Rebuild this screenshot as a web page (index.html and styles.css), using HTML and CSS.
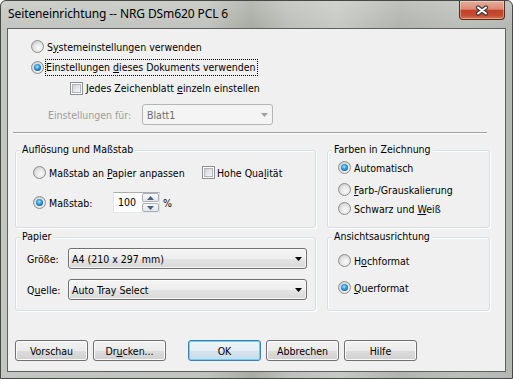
FILE: index.html
```html
<!DOCTYPE html>
<html lang="de">
<head>
<meta charset="utf-8">
<title>Seiteneinrichtung</title>
<link rel="stylesheet" href="styles.css">
</head>
<body>
<div class="window">
  <div class="titlebar">
    <div class="title">Seiteneinrichtung -- NRG DSm620 PCL 6</div>
    <div class="close">
      <svg width="14" height="11" viewBox="0 0 14 11"><path d="M3 2.5 L11 8.5 M11 2.5 L3 8.5" stroke="#3a3a3a" stroke-width="4.2" stroke-linecap="round"/><path d="M3 2.5 L11 8.5 M11 2.5 L3 8.5" stroke="#ffffff" stroke-width="2" stroke-linecap="round"/></svg>
    </div>
  </div>
  <div class="client">
    <div class="top">
      <div class="row r-sys"><span class="radio"></span><span class="lbl">S<u>y</u>stemeinstellungen verwenden</span></div>
      <div class="row r-doc"><span class="radio on"></span><span class="lbl focus">Einstellungen <u>d</u>ieses Dokuments verwenden</span></div>
      <div class="row r-each"><span class="check"></span><span class="lbl">Jedes Zeichenblatt <u>e</u>inzeln einstellen</span></div>
      <div class="row r-for"><span class="for-lbl">Einstellungen für:</span><div class="combo blatt"><span>Blatt1</span><svg class="arrow" width="7" height="4" viewBox="0 0 7 4"><polygon points="0,0 7,0 3.5,4" fill="#a0a0a0"/></svg></div></div>
    </div>
    <div class="sep"></div>
    <div class="groups g1">
      <div class="group res">
        <div class="gtitle">Auflösung und Maßstab</div>
        <div class="row grow"><span class="opt fit"><span class="radio"></span><span class="lbl">Maßstab an <u>P</u>apier anpassen</span></span><span class="check"></span><span class="lbl">Hohe Qua<u>l</u>ität</span></div>
        <div class="row grow r-scale"><span class="opt scale"><span class="radio on"></span><span class="lbl">Maßstab:</span></span><div class="spin"><span class="spin-val">100</span><span class="spin-btns"><span class="sb"><svg width="7" height="4" viewBox="0 0 7 4"><polygon points="3.5,0 7,4 0,4" fill="#4a5f86"/></svg></span><span class="sb"><svg width="7" height="4" viewBox="0 0 7 4"><polygon points="0,0 7,0 3.5,4" fill="#4a5f86"/></svg></span></span></div><span class="pct">%</span></div>
      </div>
      <div class="group colors">
        <div class="gtitle">Farben in Zeichnung</div>
        <div class="row crow"><span class="radio on"></span><span class="lbl">Automatisch</span></div>
        <div class="row crow c2"><span class="radio"></span><span class="lbl"><u>F</u>arb-/Grauskalierung</span></div>
        <div class="row crow"><span class="radio"></span><span class="lbl">Schwarz und <u>W</u>eiß</span></div>
      </div>
    </div>
    <div class="groups g2">
      <div class="group paper">
        <div class="gtitle">Papier</div>
        <div class="row prow"><span class="plbl">Größe:</span><div class="combo pcombo"><span>A4 (210 x 297 mm)</span><svg class="arrow" width="7" height="4" viewBox="0 0 7 4"><polygon points="0,0 7,0 3.5,4" fill="#000"/></svg></div></div>
        <div class="row prow p2"><span class="plbl">Q<u>u</u>elle:</span><div class="combo pcombo"><span>Auto Tray Select</span><svg class="arrow" width="7" height="4" viewBox="0 0 7 4"><polygon points="0,0 7,0 3.5,4" fill="#000"/></svg></div></div>
      </div>
      <div class="group orient">
        <div class="gtitle">Ansichtsausrichtung</div>
        <div class="row orow"><span class="radio"></span><span class="lbl">H<u>o</u>chformat</span></div>
        <div class="row orow o2"><span class="radio on"></span><span class="lbl"><u>Q</u>uerformat</span></div>
      </div>
    </div>
    <div class="buttons">
      <button class="btn">Vorschau</button>
      <button class="btn drucken">Dr<u>u</u>cken...</button>
      <button class="btn ok">OK</button>
      <button class="btn">Abbrechen</button>
      <button class="btn">Hilfe</button>
    </div>
  </div>
</div>
</body>
</html>
```
FILE: styles.css
```css
* { box-sizing: border-box; }
html, body { margin: 0; padding: 0; }
body {
  width: 513px;
  height: 379px;
  overflow: hidden;
  font-family: "DejaVu Sans Condensed", "DejaVu Sans", sans-serif;
  font-size: 10.5px;
  color: #000;
  background: #fff;
}
u { text-decoration: underline; text-underline-offset: 1px; }

.window {
  width: 513px;
  height: 379px;
  display: flex;
  flex-direction: column;
  border: 1px solid #464845;
  border-radius: 6px 6px 0 0;
  padding: 0 6px 6px;
  background:
    linear-gradient(rgba(255,255,255,0.18), rgba(255,255,255,0) 26px),
    linear-gradient(90deg, #c4c6c1 0%, #c1c3be 40%, #a9aca5 49%, #bdbfba 56%, #c7c9c4 66%, #b2b4af 78%, #bcbeb9 90%, #b5b7b2 100%);
}

.titlebar {
  height: 27px;
  display: flex;
  justify-content: space-between;
  align-items: flex-start;
}
.title {
  padding-left: 1px;
  font-family: "Noto Sans", "Open Sans", sans-serif;
  font-size: 12px;
  line-height: 26px;
  color: #000;
  letter-spacing: -0.1px;
}
.close {
  width: 46px;
  height: 19px;
  margin-right: 1px;
  border: 1px solid #5b2b20;
  border-top: none;
  border-radius: 0 0 4px 4px;
  background: linear-gradient(#e7ad9c 0%, #d98a74 45%, #c2412a 52%, #c64a30 80%, #d9764f 100%);
  box-shadow: inset 0 0 0 1px rgba(255,255,255,0.35);
  display: flex;
  align-items: center;
  justify-content: center;
}

.client {
  flex: 1;
  border: 1px solid #5f605d;
  background: #f0f0f0;
  display: flex;
  flex-direction: column;
}

.row { display: flex; align-items: center; }
.lbl { white-space: nowrap; }

.radio {
  flex: none;
  position: relative;
  width: 13px;
  height: 13px;
  margin-right: 3px;
  border-radius: 50%;
  border: 1px solid #8c8d8d;
  background: radial-gradient(circle at 60% 62%, #fbfbfb 0%, #e6e6e6 45%, #cdcdcd 80%, #dadada 100%);
}
.radio.on::after {
  content: "";
  position: absolute;
  inset: 2px;
  border-radius: 50%;
  background: radial-gradient(circle at 45% 40%, #a6ecff 0%, #3ba6e6 35%, #155ba8 75%, #0d3f7a 100%);
}

.check {
  flex: none;
  position: relative;
  width: 13px;
  height: 13px;
  margin-right: 3px;
  border: 1px solid #8e8f8f;
  background: #fdfdfd;
}
.check::after {
  content: "";
  position: absolute;
  inset: 1px;
  border: 1px solid #b0b4b9;
  background: linear-gradient(135deg, #cfd2d6 0%, #e7e8ea 55%, #f7f7f7 100%);
}

.focus { outline: 1px dotted #000; outline-offset: 0; padding: 1px 1px 2px 0; margin-left: -1px; }

.top { padding-top: 7px; }
.r-sys, .r-doc { height: 21px; padding-left: 23px; }
.r-each { height: 20px; padding-left: 62px; }
.r-for { height: 21px; margin-top: 6px; padding-left: 40px; }
.for-lbl { width: 94px; color: #9d9d9d; white-space: nowrap; }

.combo {
  display: flex;
  align-items: center;
  justify-content: space-between;
  height: 21px;
  border: 1px solid #707070;
  border-radius: 3px;
  padding: 0 4px 0 3px;
  background: linear-gradient(#f4f4f4 0%, #eeeeee 50%, #e3e3e3 52%, #d9d9d9 100%);
  box-shadow: inset 0 0 0 1px rgba(255,255,255,0.7);
  white-space: nowrap;
}
.blatt {
  width: 131px;
  padding-left: 4px;
  border-color: #b2b6b9;
  background: #f4f4f4;
  box-shadow: none;
  color: #6d6d6d;
}
.arrow { flex: none; }

.sep {
  margin: 7px 0 0 5px;
  width: 474px;
  height: 2px;
  border-top: 1px solid #a0a0a0;
  border-bottom: 1px solid #ffffff;
}

.groups { display: flex; gap: 11px; margin-left: 7px; }
.g1 { margin-top: 16px; }
.g1 .group { height: 78px; }
.g2 { margin-top: 9px; }
.g2 .group { height: 74px; }

.group {
  position: relative;
  border: 1px solid #d5dfe5;
  border-radius: 3px;
  box-shadow: inset 1px 1px 0 #ffffff, 1px 1px 0 #ffffff;
}
.gtitle {
  position: absolute;
  top: -8px;
  left: 4px;
  padding: 0 2px;
  line-height: 13px;
  background: #f0f0f0;
  white-space: nowrap;
}

.res { width: 301px; padding: 11px 0 0 17px; }
.grow { height: 21px; }
.r-scale { margin-top: 9px; }
.opt { display: flex; align-items: center; flex: none; }
.fit { width: 169px; }
.scale { width: 80px; }
.res .check { margin-right: 2px; }

.spin {
  display: flex;
  width: 47px;
  height: 21px;
  border: 1px solid #abadb3;
  border-right-color: #dbdfe6;
  border-bottom-color: #e3e9ef;
  border-left-color: #e2e3ea;
  background: #fff;
}
.spin-val { flex: 1; padding-left: 4px; line-height: 19px; }
.spin-btns {
  width: 17px;
  display: flex;
  flex-direction: column;
  gap: 1px;
  padding: 0 0 0 0;
}
.sb {
  flex: 1;
  display: flex;
  align-items: center;
  justify-content: center;
  border: 1px solid #a9adb4;
  border-radius: 2px;
  background: linear-gradient(#f7f8fa, #e3e6ea);
}
.pct { margin-left: 3px; }

.colors { width: 163px; padding: 7px 0 0 10px; }
.crow { height: 19px; }
.c2 { margin-top: 3px; }

.paper { width: 301px; padding: 10px 0 0 11px; }
.prow { height: 21px; }
.p2 { margin-top: 10px; }
.plbl { width: 41px; white-space: nowrap; }
.pcombo { width: 239px; }

.orient { width: 163px; padding: 13px 0 0 10px; }
.orow { height: 19px; }
.o2 { margin-top: 8px; }

.buttons { display: flex; margin: 29px 0 0 7px; }
.btn {
  width: 73px;
  height: 21px;
  margin: 0 5px 0 0;
  padding: 0;
  font: inherit;
  color: #000;
  border: 1px solid #707070;
  border-radius: 3px;
  background: linear-gradient(#f2f2f2 0%, #ebebeb 50%, #dddddd 52%, #cfcfcf 100%);
  box-shadow: inset 0 0 0 1px #fbfbfb;
}
.drucken { margin-right: 22px; }
.ok {
  border-color: #3c7fb1;
  background: linear-gradient(#edf4f9 0%, #e4eef5 50%, #d6e4ee 52%, #c9dce9 100%);
  box-shadow: inset 0 0 0 1px #6cd0f7;
}
```
